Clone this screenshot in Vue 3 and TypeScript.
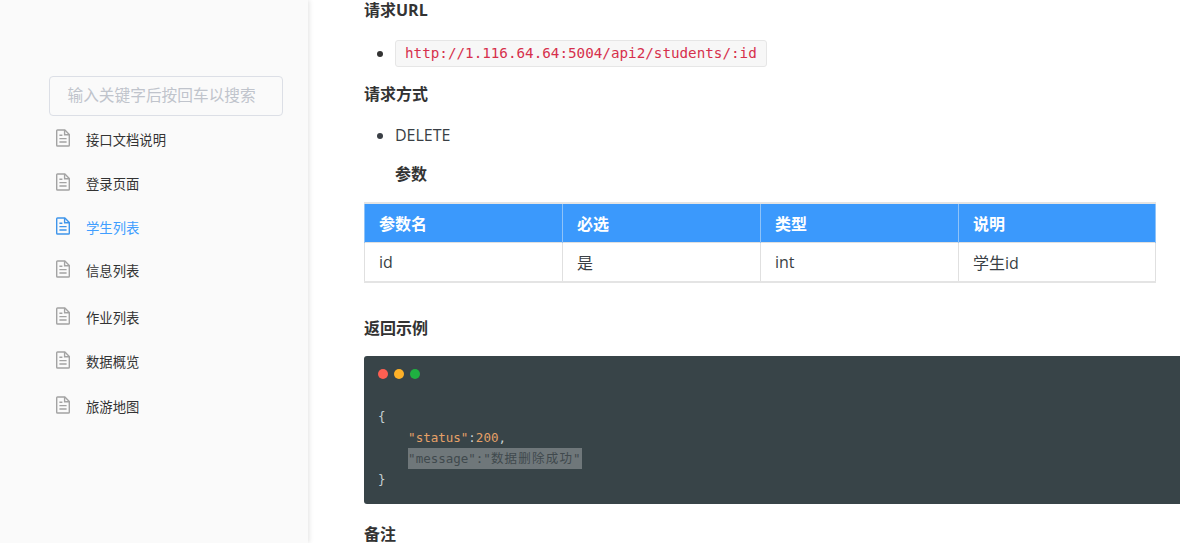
<script setup lang="ts">
const navItems: { label: string; active?: boolean }[] = [
  { label: '接口文档说明' },
  { label: '登录页面' },
  { label: '学生列表', active: true },
  { label: '信息列表' },
  { label: '作业列表' },
  { label: '数据概览' },
  { label: '旅游地图' },
]
const headers = ['参数名', '必选', '类型', '说明']
const row = ['id', '是', 'int', '学生id']
</script>

<template>
  <div class="page">
    <aside class="sidebar">
      <div class="search">输入关键字后按回车以搜索</div>
      <ul class="nav">
        <li v-for="item in navItems" :key="item.label" class="nav-item" :class="{ active: item.active }">
          <svg class="doc" width="16" height="18" viewBox="0 0 16 18" fill="none" stroke="currentColor" stroke-width="1.4">
            <path d="M1.7 1.8q0-.8.8-.8h7.4l4.4 4.4v10.8q0 .8-.8.8H2.5q-.8 0-.8-.8z" stroke-linejoin="round" />
            <path d="M9.6 1v4.8h4.7" />
            <path d="M4.4 6.3h3M4.4 9.6h7.2M4.4 13h7.2" />
          </svg>
          <span class="nav-label">{{ item.label }}</span>
        </li>
      </ul>
    </aside>
    <main class="content">
      <h4 class="first">请求URL</h4>
      <ul class="list url-list">
        <li><code class="inline-code">http://1.116.64.64:5004/api2/students/:id</code></li>
      </ul>
      <h4 class="method">请求方式</h4>
      <ul class="list method-list">
        <li>DELETE</li>
      </ul>
      <h4 class="params">参数</h4>
      <table class="table">
        <colgroup>
          <col v-for="h in headers" :key="h" class="col" />
        </colgroup>
        <thead>
          <tr><th v-for="h in headers" :key="h">{{ h }}</th></tr>
        </thead>
        <tbody>
          <tr><td v-for="c in row" :key="c">{{ c }}</td></tr>
        </tbody>
      </table>
      <h4 class="example">返回示例</h4>
      <div class="code-block">
        <div class="dots">
          <span class="dot red"></span>
          <span class="dot yellow"></span>
          <span class="dot green"></span>
        </div>
        <pre class="code"><span class="plain">{</span>
    <span class="orange">"status"</span><span class="plain">:</span><span class="orange">200</span><span class="plain">,</span>
    <span class="selected">"message":"<span class="cjk">数据删除成功</span>"</span>
<span class="plain">}</span></pre>
      </div>
      <h4 class="note">备注</h4>
    </main>
  </div>
</template>

<style>
html, body { margin: 0; background: #fff; overflow: hidden; }
</style>

<style scoped>
.page {
  display: flex;
  width: 1180px;
  height: 543px;
  overflow: hidden;
  background: #fff;
  color: #333;
  font-family: "Open Sans", "Noto Sans CJK SC", sans-serif;
}
.sidebar {
  flex: 0 0 308px;
  box-sizing: border-box;
  padding: 76px 25px 0 49px;
  background: #fafafa;
  box-shadow: 1px 0 5px rgba(0, 0, 0, 0.12);
}
.search {
  box-sizing: border-box;
  width: 234px;
  height: 40px;
  padding-left: 17.5px;
  border: 1px solid #dcdfe6;
  border-radius: 4px;
  color: #c0c4cc;
  font-size: 15.7px;
  line-height: 36px;
  font-family: "Noto Sans CJK SC", sans-serif;
}
.nav { list-style: none; margin: 0; padding: 0; }
.nav-item {
  display: flex;
  align-items: flex-start;
  height: 44px;
  padding-left: 6px;
  color: #333;
}
.nav-item:first-child { margin-top: 11px; }
.nav-item:nth-child(3) { height: 43px; }
.nav-item:nth-child(4) { height: 47px; }
.nav-item:nth-child(6) { height: 45px; }
.doc { flex: none; color: #a3a3a3; margin-top: 2px; }
.nav-label {
  margin-left: 15px;
  margin-top: 3px;
  font-size: 13.33px;
  line-height: 20px;
  font-family: "Noto Sans CJK SC", sans-serif;
}
.nav-item.active { color: #409eff; }
.nav-item.active .doc { color: #3f95ea; }
.content {
  flex: 1;
  min-width: 0;
  padding-left: 56px;
  font-size: 16px;
}
h4 {
  margin: 0;
  font-size: 16px;
  line-height: 22px;
  font-weight: 700;
  color: #333;
  font-family: "Open Sans", "Noto Sans CJK SC", sans-serif;
}
.first { margin-top: -1px; }
.list { margin: 0; padding: 0 0 0 31px; line-height: 26px; }
.url-list { margin-top: 19px; }
.inline-code {
  display: inline-block;
  box-sizing: border-box;
  height: 27px;
  padding: 0 9px;
  background: #f7f7f7;
  border: 1px solid #e6e6e6;
  border-radius: 3px;
  color: #d6304c;
  font-family: "DejaVu Sans Mono", monospace;
  font-size: 14.25px;
  line-height: 25px;
  vertical-align: top;
}
.method { margin-top: 16px; }
.method-list { margin-top: 17px; color: #3a3f45; }
.params { margin: 15px 0 0 31px; }
.table {
  margin-top: 17px;
  width: 792px;
  table-layout: fixed;
  border-collapse: collapse;
  border-style: solid;
  border-color: #e4e4e4;
  border-width: 2px 1px;
  font-size: 16px;
}
.col { width: 198px; }
.col:last-child { width: 197px; }
th, td {
  box-sizing: border-box;
  padding: 0 14px;
  text-align: left;
  border: 1px solid #e0e0e0;
}
th {
  height: 39px;
  background: #3b99fc;
  color: #fff;
  border-color: #8fc3f8;
  border-top: 0;
  border-bottom: 0;
  font-weight: 700;
}
td { height: 40px; color: #3a3f45; }
.example { margin-top: 34px; }
.code-block {
  margin-top: 17px;
  height: 148px;
  box-sizing: border-box;
  padding: 13px 14px 0;
  background: #384448;
  border-radius: 3px 0 0 3px;
}
.dots { display: flex; gap: 6px; height: 10px; }
.dot { width: 10px; height: 10px; border-radius: 50%; }
.red { background: #fc5f52; }
.yellow { background: #fdb128; }
.green { background: #1fb141; }
.code {
  margin: 27px 0 0;
  font-family: "DejaVu Sans Mono", "Noto Sans CJK SC", monospace;
  font-size: 12.5px;
  line-height: 21.1px;
  color: #d3d3d3;
}
.orange { color: #e6a167; }
.plain { color: #c5d0d3; }
.selected { background: #6f777a; color: #40494d; display: inline-block; padding: 0 1px 0 0; }
.cjk { letter-spacing: 1.2px; }
.note { margin-top: 19px; }
</style>
